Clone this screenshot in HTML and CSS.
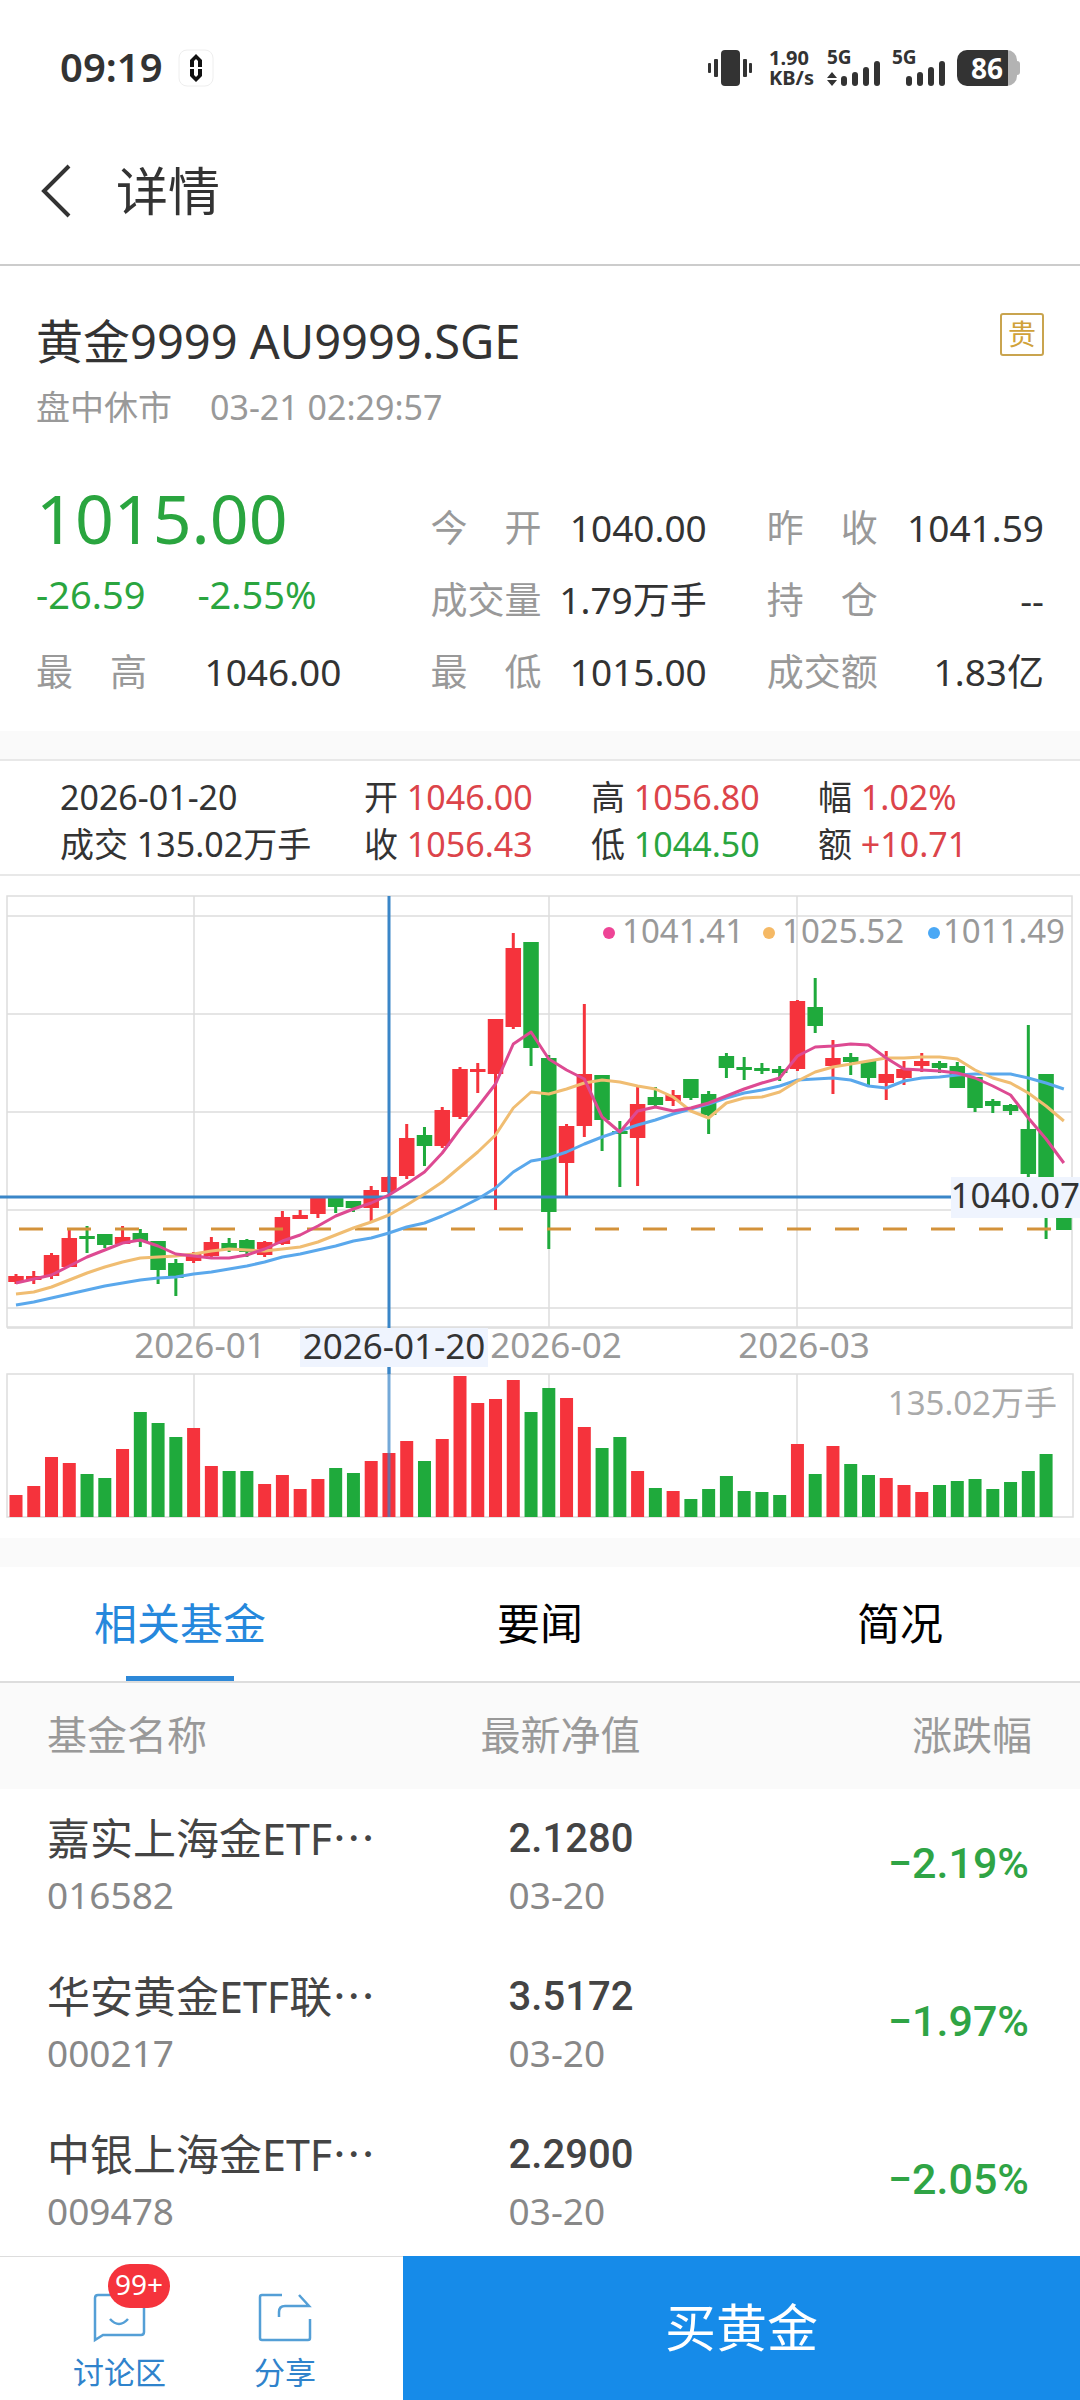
FILE: index.html
```html
<!DOCTYPE html>
<html lang="zh-CN">
<head>
  <meta charset="UTF-8" />
  <meta name="viewport" content="width=device-width, initial-scale=1.0"/>
  <title>详情</title>
  <link rel="stylesheet" href="styles.css">
</head>
<body>
<div class="page">
  <!-- status bar -->
  <div class="status">
    <span class="time">09:19</span>
    <svg class="app-dot" width="36" height="38" viewBox="0 0 36 38">
      <rect x="1" y="1" width="34" height="36" rx="8" fill="#fff" stroke="#eee"/>
      <path d="M18 5l6 6v7h-4v-6l-2-2-2 2v6h-4v-7zM18 33l6-6v-7h-4v6l-2 2-2-2v-6h-4v7z" fill="#111"/>
    </svg>
    <div class="status-right">
      <svg width="46" height="36" viewBox="0 0 46 36" fill="#333">
        <rect x="0" y="13" width="3" height="10" rx="1"/>
        <rect x="6" y="9" width="4" height="18" rx="1"/>
        <rect x="13" y="0" width="19" height="36" rx="4"/>
        <rect x="35" y="9" width="4" height="18" rx="1"/>
        <rect x="41" y="13" width="3" height="10" rx="1"/>
      </svg>
      <div class="speed"><span>1.90</span><span>KB/s</span></div>
      <div class="signal">
        <span>5G</span>
        <svg width="55" height="26" viewBox="0 0 55 26" fill="#333">
          <path d="M0 17l5-6 5 6zM0 19h10l-5 6z"/>
          <rect x="14" y="15" width="6" height="10" rx="3"/>
          <rect x="25" y="11" width="6" height="14" rx="3"/>
          <rect x="36" y="6" width="6" height="19" rx="3"/>
          <rect x="47" y="0" width="6" height="25" rx="3"/>
        </svg>
      </div>
      <div class="signal">
        <span>5G</span>
        <svg width="55" height="26" viewBox="0 0 55 26" fill="#333">
          <rect x="14" y="15" width="6" height="10" rx="3"/>
          <rect x="25" y="11" width="6" height="14" rx="3"/>
          <rect x="36" y="6" width="6" height="19" rx="3"/>
          <rect x="47" y="0" width="6" height="25" rx="3"/>
        </svg>
      </div>
      <div class="battery">86</div>
    </div>
  </div>

  <header class="topbar">
    <button class="back" aria-label="返回">
      <svg width="32" height="54" viewBox="0 0 32 54" fill="none" stroke="#333" stroke-width="4"><path d="M29 2L4 27l25 25"/></svg>
    </button>
    <h1>详情</h1>
  </header>

  <!-- quote -->
  <section class="quote">
    <div class="quote-title">
      <h2>黄金9999 AU9999.SGE</h2>
      <span class="tag">贵</span>
    </div>
    <p class="quote-time"><span>盘中休市</span><span>03-21 02:29:57</span></p>
    <div class="stats">
      <div class="price">
        <strong>1015.00</strong>
        <p><span>-26.59</span><span>-2.55%</span></p>
      </div>
      <div class="stat"><span>今 开</span><b>1040.00</b></div>
      <div class="stat"><span>昨 收</span><b>1041.59</b></div>
      <div class="stat"><span>成交量</span><b>1.79万手</b></div>
      <div class="stat"><span>持 仓</span><b>--</b></div>
      <div class="stat first"><span>最 高</span><b>1046.00</b></div>
      <div class="stat"><span>最 低</span><b>1015.00</b></div>
      <div class="stat"><span>成交额</span><b>1.83亿</b></div>
    </div>
  </section>

  <!-- selected day -->
  <section class="day">
    <span>2026-01-20</span>
    <span>开 <i class="up">1046.00</i></span>
    <span>高 <i class="up">1056.80</i></span>
    <span>幅 <i class="up">1.02%</i></span>
    <span>成交 135.02万手</span>
    <span>收 <i class="up">1056.43</i></span>
    <span>低 <i class="down">1044.50</i></span>
    <span>额 <i class="up">+10.71</i></span>
  </section>

  <section class="chart">
    <svg viewBox="0 0 1080 648">
      <g class="grid">
        <path d="M7 26H1072M7 124H1072M7 222H1072M7 320H1072M7 418H1072"/>
        <path d="M194 6V437M549 6V437M797 6V437"/>
        <rect x="7" y="6" width="1065" height="431"/>
        <path d="M7 438H1073"/>
        <path d="M194 484V627M549 484V627M797 484V627"/>
        <rect x="7" y="484" width="1066" height="143"/>
      </g>
      <g id="candles"></g>
      <path class="cross" d="M0 307H1080M389 6V484"/>
      <path class="last-price" d="M19 339H1052"/>
      <polyline id="ma20" class="ma blue"/>
      <polyline id="ma10" class="ma orange"/>
      <polyline id="ma5" class="ma pink"/>
      <g id="volumes"></g>
      <path class="cross thin" d="M389 477V627"/>

      <circle cx="609" cy="43" r="6" fill="#ee4496"/>
      <circle cx="769" cy="43" r="6" fill="#f5b965"/>
      <circle cx="934" cy="43" r="6" fill="#4aa8f5"/>
      <text class="muted ma-text" x="622" y="53">1041.41</text>
      <text class="muted ma-text" x="782" y="53">1025.52</text>
      <text class="muted ma-text" x="1065" y="53" text-anchor="end">1011.49</text>

      <rect class="label-bg" x="951" y="287" width="129" height="41"/>
      <text x="1080" y="318" text-anchor="end">1040.07</text>

      <text class="muted" x="200" y="468" text-anchor="middle">2026-01</text>
      <text class="muted" x="556" y="468" text-anchor="middle">2026-02</text>
      <text class="muted" x="804" y="468" text-anchor="middle">2026-03</text>
      <rect class="label-bg" x="300" y="438" width="188" height="39"/>
      <text x="394" y="469" text-anchor="middle">2026-01-20</text>
      <text class="muted ma-text light" x="1057" y="525" text-anchor="end">135.02万手</text>
    </svg>
  </section>

  <nav class="tabs">
    <button class="active">相关基金</button>
    <button>要闻</button>
    <button>简况</button>
  </nav>

  <table class="funds">
    <thead>
      <tr><th>基金名称</th><th>最新净值</th><th>涨跌幅</th></tr>
    </thead>
    <tbody>
      <tr>
        <td><span class="name">嘉实上海金ETF⋯</span><span class="sub">016582</span></td>
        <td><span class="value">2.1280</span><span class="sub">03-20</span></td>
        <td>−2.19%</td>
      </tr>
      <tr>
        <td><span class="name">华安黄金ETF联⋯</span><span class="sub">000217</span></td>
        <td><span class="value">3.5172</span><span class="sub">03-20</span></td>
        <td>−1.97%</td>
      </tr>
      <tr>
        <td><span class="name">中银上海金ETF⋯</span><span class="sub">009478</span></td>
        <td><span class="value">2.2900</span><span class="sub">03-20</span></td>
        <td>−2.05%</td>
      </tr>
    </tbody>
  </table>

  <footer class="bottom">
    <div class="links">
      <a href="#">
        <svg width="54" height="50" viewBox="0 0 54 50"><path d="M5 2H48q3 0 3 3V39q0 3-3 3H10L2 47V5q0-3 3-3zM17 26q9 10 18 0"/></svg>
        <span class="badge">99+</span>
        讨论区
      </a>
      <a href="#">
        <svg width="54" height="50" viewBox="0 0 54 50"><path d="M24 2H4Q2 2 2 4V45q0 2 2 2H50q2 0 2-2V26M21 24V19q0-6 6-6H51L41 2"/></svg>
        分享
      </a>
    </div>
    <button class="buy">买黄金</button>
  </footer>
</div>
<script src="chart.js"></script>
</body>
</html>
```
FILE: styles.css
```css
* {
  box-sizing: border-box;
}
body {
  margin: 0;
  font-family: "Noto Sans", "Noto Sans CJK SC", sans-serif;
  background: #fff;
  color: #333;
}
h1, h2, p {
  margin: 0;
  font-weight: 400;
}
b, i {
  font-weight: 400;
  font-style: normal;
}
button {
  border: none;
  padding: 0;
  background: none;
  font-family: inherit;
  cursor: pointer;
}
svg {
  display: block;
}
.page {
  display: flex;
  flex-direction: column;
  min-height: 100vh;
}

/* status bar */
.status {
  display: flex;
  align-items: center;
  height: 136px;
  padding: 0 60px;
}
.time {
  font-size: 40px;
  font-weight: 600;
  line-height: 52px;
  padding-bottom: 2px;
}
.app-dot {
  margin-left: 15px;
}
.status-right {
  display: flex;
  align-items: center;
  margin-left: auto;
  gap: 10px;
}
.speed {
  display: flex;
  flex-direction: column;
  width: 53px;
  padding-left: 5px;
  font-size: 20px;
  font-weight: 700;
  line-height: 20px;
}
.signal {
  position: relative;
  padding-top: 11px;
}
.signal span {
  position: absolute;
  left: 0;
  top: -3px;
  font-size: 19px;
  font-weight: 700;
  line-height: 20px;
}
.battery {
  position: relative;
  width: 60px;
  height: 36px;
  margin-right: 3px;
  border-radius: 10px;
  background: linear-gradient(to right, #333 51px, #b3b3b3 51px);
  color: #fff;
  font-size: 28px;
  font-weight: 700;
  line-height: 36px;
  text-align: center;
}
.battery::after {
  content: "";
  position: absolute;
  right: -3px;
  top: 11px;
  width: 4px;
  height: 14px;
  border-radius: 0 3px 3px 0;
  background: #b3b3b3;
}

/* top bar */
.topbar {
  display: flex;
  align-items: center;
  height: 130px;
  padding: 0 40px 18px;
  border-bottom: 2px solid #ccc;
}
.back {
  width: 76px;
}
.topbar h1 {
  font-size: 52px;
  line-height: 60px;
}

/* quote */
.quote {
  padding: 46px 36px 23px;
}
.quote-title {
  display: flex;
  justify-content: space-between;
}
.quote-title h2 {
  font-size: 47px;
  line-height: 58px;
}
.tag {
  width: 44px;
  height: 43px;
  margin-top: 1px;
  border: 2px solid #c9a44f;
  border-radius: 3px;
  color: #d0a23a;
  font-size: 28px;
  line-height: 38px;
  text-align: center;
}
.quote-time {
  display: flex;
  gap: 38px;
  padding-top: 17px;
  color: #999;
  font-size: 34px;
  line-height: 40px;
}
.stats {
  display: grid;
  grid-template-columns: 394fr 336fr 277fr;
  grid-template-rows: 84px 72px 72px;
  align-items: end;
  margin-top: 53px;
}
.stat {
  display: flex;
  justify-content: space-between;
  padding-right: 60px;
  font-size: 37px;
  line-height: 72px;
}
.stat span {
  width: 111px;
  color: #999;
  text-align-last: justify;
}
.stat:nth-child(3), .stat:nth-child(5), .stat:nth-child(8) {
  padding-right: 0;
}
.stat.first {
  padding-right: 89px;
}
.price {
  grid-row: 1 / 3;
  align-self: start;
  color: #2aa53f;
}
.price strong {
  display: block;
  font-size: 68px;
  font-weight: 400;
  line-height: 76px;
}
.price p {
  display: flex;
  gap: 52px;
  font-size: 38px;
  line-height: 76px;
}

/* selected day */
.day {
  display: grid;
  grid-template-columns: 304fr 227fr 227fr 262fr;
  padding: 15px 0 6px 60px;
  border-top: 28px solid #fafafa;
  border-bottom: 2px solid #e8e8e8;
  font-size: 34px;
  line-height: 47px;
  white-space: nowrap;
  box-shadow: inset 0 2px #e8e8e8;
}
.up {
  color: #dc444a;
}
.down {
  color: #2aa53f;
}

/* chart */
.chart {
  padding-top: 14px;
}
.chart svg {
  width: 100%;
  height: auto;
}
.chart text {
  font-size: 35px;
  fill: #333;
}
.chart text.muted {
  fill: #999;
}
.chart text.ma-text {
  font-size: 33px;
}
.chart text.light {
  fill: #aaa;
}
.grid {
  fill: none;
  stroke: #ddd;
  stroke-width: 1.5;
}
.label-bg {
  fill: #eff4fe;
}
.cross {
  stroke: #3a86c8;
  stroke-width: 3;
}
.last-price {
  stroke: #d3923a;
  stroke-width: 3;
  stroke-dasharray: 24 24;
}
.ma {
  fill: none;
  stroke-width: 3;
  stroke-linejoin: round;
}
.pink {
  stroke: #dd4a92;
}
.orange {
  stroke: #f0bd72;
}
.blue {
  stroke: #5aa8ec;
}
.bar-up {
  fill: #f5333c;
}
.bar-down {
  fill: #1faa3c;
}
.cross.thin {
  opacity: .7;
}

/* tabs */
.tabs {
  display: flex;
  border-top: 29px solid #fafafa;
  border-bottom: 2px solid #ddd;
}
.tabs button {
  flex: 1;
  height: 114px;
  color: #000;
  font-size: 43px;
  line-height: 60px;
}
.tabs .active {
  color: #2688dc;
  background: linear-gradient(#2d88d8, #2d88d8) bottom / 108px 5px no-repeat;
}

/* fund list */
.funds {
  width: 100%;
  border-collapse: collapse;
  table-layout: fixed;
}
.funds th {
  height: 106px;
  padding: 0 0 6px;
  background: #fafafa;
  color: #999;
  font-size: 40px;
  font-weight: 400;
  text-align: left;
}
.funds th:first-child, .funds td:first-child {
  padding-left: 47px;
}
.funds th:nth-child(1) {
  width: 44.5%;
}
.funds th:last-child {
  padding-right: 48px;
  text-align: right;
}
.funds td {
  height: 158px;
  padding: 20px 0 0;
  vertical-align: top;
}
.funds td:nth-child(2) {
  padding-left: 28px;
}
.funds td:last-child {
  padding-top: 46px;
  padding-right: 51px;
  color: #2fa445;
  font-family: Roboto, sans-serif;
  font-size: 43px;
  font-weight: 500;
  line-height: 56px;
  text-align: right;
}
.funds tr:last-child td {
  height: 149px;
}
.name, .value, .sub {
  display: block;
  line-height: 60px;
}
.name {
  color: #444;
  font-size: 43px;
}
.value {
  color: #444;
  font-family: Roboto, sans-serif;
  font-size: 40px;
  font-weight: 500;
}
.funds .sub {
  color: #888;
  font-size: 37px;
  line-height: 52px;
}

/* bottom bar */
.bottom {
  display: flex;
  height: 144px;
  margin-top: auto;
}
.links {
  display: flex;
  gap: 88px;
  width: 403px;
  padding-left: 73px;
  border-top: 1px solid #ddd;
}
.links a {
  position: relative;
  display: flex;
  flex-direction: column;
  align-items: center;
  padding-top: 36px;
  color: #2f83cc;
  font-size: 31px;
  line-height: 44px;
  text-decoration: none;
}
.links svg {
  margin-bottom: 7px;
  fill: none;
  stroke: #549fd6;
  stroke-width: 2.5;
}
.badge {
  position: absolute;
  left: 35px;
  top: 7px;
  width: 62px;
  height: 44px;
  border-radius: 22px;
  background: #f5333c;
  color: #fff;
  font-size: 28px;
  line-height: 40px;
  text-align: center;
}
.buy {
  flex: 1;
  padding-bottom: 6px;
  background: #168be9;
  color: #fff;
  font-size: 51px;
}
```
FILE: chart.js
```javascript
// one row per day: up/down, high, body top, body bottom, low, volume
const days = [
  ['u',384,386,392,394,22],['u',381,386,390,394,31],['u',363,365,386,389,60],['u',338,348,377,377,54],
  ['d',336,346,349,363,43],['d',344,344,355,358,39],['u',336,347,354,354,68],['d',339,343,352,357,105],
  ['d',351,351,380,394,94],['d',369,373,388,406,80],['u',362,364,371,373,89],['u',347,352,366,367,51],
  ['d',348,353,359,362,46],['d',349,350,362,367,46],['u',351,352,365,367,33],['u',321,327,354,355,42],
  ['u',320,325,329,329,28],['u',308,308,324,328,38],['d',307,307,317,323,49],['d',311,311,318,322,44],
  ['u',296,300,318,332,56],['u',286,287,302,303,64],['u',234,248,286,289,76],['d',237,245,256,276,56],
  ['u',217,220,256,258,78],['u',177,179,227,229,141],['u',173,179,182,203,114],['u',129,129,184,320,118],
  ['u',43,58,137,139,137],['d',52,52,158,176,105],['d',165,168,322,359,129],['u',234,236,273,307,119],
  ['u',114,184,236,247,90],['d',185,185,230,261,69],['d',231,241,244,297,80],['u',197,214,248,296,46],
  ['d',197,207,215,216,29],['u',200,205,211,216,26],['d',189,189,208,210,18],['d',201,204,225,244,28],
  ['d',163,166,178,188,41],['d',167,177,180,190,26],['d',173,178,181,184,25],['d',176,179,183,191,22],
  ['u',110,111,179,181,73],['d',88,117,136,143,43],['u',150,168,176,204,71],['d',163,167,172,185,53],
  ['d',171,171,188,195,42],['u',161,184,193,210,39],['u',171,179,188,195,32],['u',163,171,176,182,25],
  ['d',171,173,178,183,32],['d',172,176,198,198,36],['d',187,187,218,222,38],['d',209,211,216,223,28],
  ['d',214,215,221,225,35],['d',135,239,284,290,46],['d',184,184,300,349,63],['d',325,325,340,340,0]
];

const averages = {
  ma5: [393,389,385,376,367,360,353,350,356,364,366,368,368,365,359,351,345,336,326,319,313,305,294,282,263,239,217,194,154,142,169,180,189,227,242,221,217,221,218,213,206,199,193,188,166,157,156,154,155,168,179,180,181,183,188,196,205,228,249,273],
  ma10: [404,402,397,390,383,377,372,368,367,366,364,361,359,360,361,359,357,352,345,338,332,325,315,304,292,277,262,245,218,202,204,199,193,190,192,196,199,207,221,228,213,208,207,202,191,182,177,174,171,168,168,167,167,169,180,188,193,203,216,231],
  ma20: [415,412,408,404,400,396,393,390,388,387,384,382,379,376,372,367,364,360,356,351,348,343,337,333,326,318,309,298,282,271,268,262,254,247,241,235,230,224,219,214,208,203,200,196,190,189,188,190,196,198,191,188,187,185,184,184,184,188,193,199]
};

const step = 17.76;
const volumeBase = 627;
const centre = i => 16 + i * step;

function bar(x, y, width, height, type) {
  const cls = type === 'u' ? 'bar-up' : 'bar-down';
  return `<rect class="${cls}" x="${x - width / 2}" y="${y}" width="${width}" height="${height}"/>`;
}

let candles = '';
let volumes = '';
days.forEach(([type, high, top, bottom, low, volume], i) => {
  const x = centre(i);
  candles += bar(x, high, 3, low - high, type) + bar(x, top, 15.5, bottom - top, type);
  volumes += bar(x, volumeBase - volume, 13, volume, type);
});
document.getElementById('candles').innerHTML = candles;
document.getElementById('volumes').innerHTML = volumes;

for (const id in averages) {
  const points = averages[id].map((y, i) => `${centre(i)},${y}`).join(' ');
  document.getElementById(id).setAttribute('points', points);
}
```
